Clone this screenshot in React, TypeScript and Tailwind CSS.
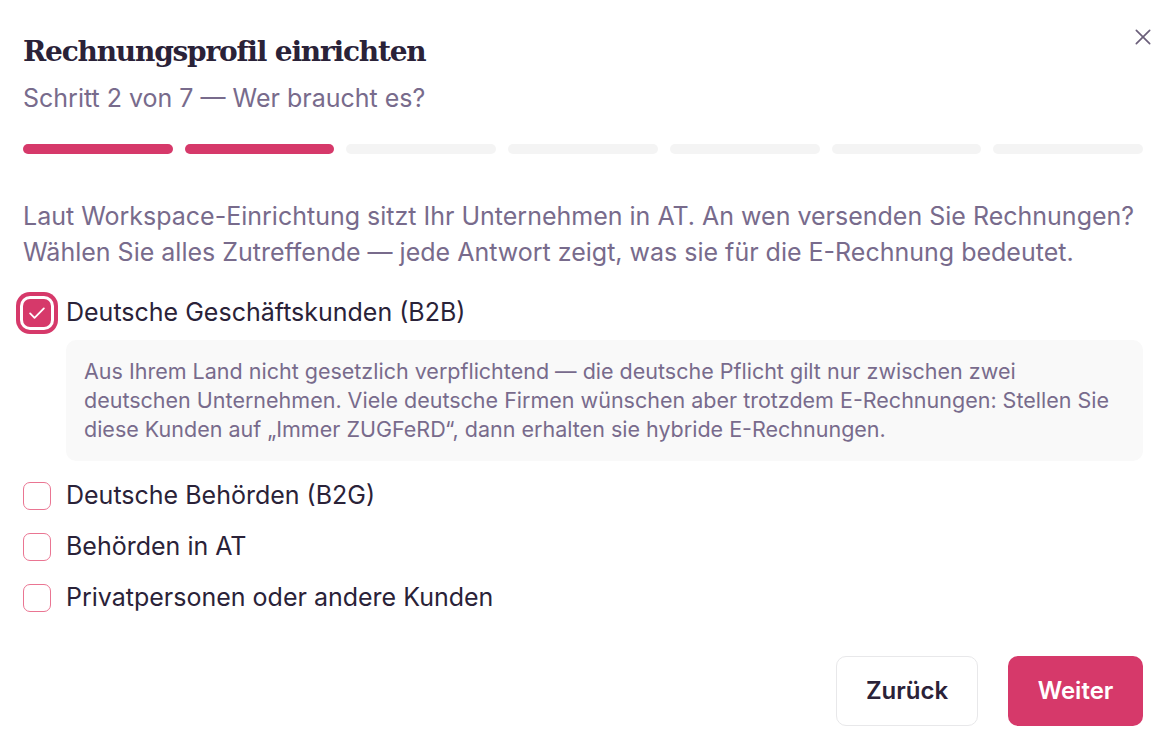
import React from "react";

const PINK = "#d6396a";

function Box({ checked }: { checked?: boolean }) {
  if (checked) {
    return (
      <span className="flex h-[28px] w-[28px] shrink-0 items-center justify-center rounded-[7px] bg-[#d6396a] ring-4 ring-[#d6396a] ring-offset-[3px] ring-offset-white">
        <svg width="22" height="22" viewBox="0 0 24 24" fill="none" stroke="white" strokeWidth="2" strokeLinecap="round" strokeLinejoin="round">
          <path d="M4.5 12.5l4.8 4.8L19.5 7" />
        </svg>
      </span>
    );
  }
  return <span className="h-[28px] w-[28px] shrink-0 rounded-[7px] border-[1.5px] border-[#ea7592] bg-white" />;
}

export default function App() {
  const steps = [true, true, false, false, false, false, false];
  return (
    <div className="relative h-[752px] w-[1174px] bg-white pl-[23px] pr-[31px] pt-[30px] text-[#2a2238]" style={{ fontFamily: "Inter, 'Noto Sans', sans-serif" }}>
      <button className="absolute right-[21px] top-[27px] text-[#6b5f7a]">
        <svg width="20" height="20" viewBox="0 0 24 24" fill="none" stroke="currentColor" strokeWidth="2" strokeLinecap="round">
          <path d="M4 4l16 16M20 4L4 20" />
        </svg>
      </button>
      <h1 className="text-[28px] font-bold leading-[44px] tracking-[-1.2px] text-[#2a2238]" style={{ fontFamily: "'DejaVu Serif', 'Liberation Serif', serif" }}>
        Rechnungsprofil einrichten
      </h1>
      <p className="mt-[8px] text-[25px] leading-[32px] text-[#786b8c]">Schritt 2 von 7 — Wer braucht es?</p>
      <div className="mt-[30px] flex gap-3">
        {steps.map((on, i) => (
          <div key={i} className={`h-[10px] flex-1 rounded-full ${on ? "bg-[#d6396a]" : "bg-[#f4f4f4]"}`} />
        ))}
      </div>
      <p className="mt-[44px] text-[25px] leading-[36px] text-[#786b8c]">
        Laut Workspace-Einrichtung sitzt Ihr Unternehmen in AT. An wen versenden Sie Rechnungen? Wählen Sie alles Zutreffende — jede Antwort zeigt, was sie für die E-Rechnung bedeutet.
      </p>
      <div className="mt-[25px] flex flex-col">
        <label className="flex h-[36px] items-center gap-[15px]">
          <Box checked />
          <span className="text-[25px]">Deutsche Geschäftskunden (B2B)</span>
        </label>
        <div className="ml-[43px] mt-[9px] rounded-[10px] bg-[#f9f9f9] px-[18px] py-[17px] text-[21.5px] leading-[29px] text-[#786b8c]">
          Aus Ihrem Land nicht gesetzlich verpflichtend — die deutsche Pflicht gilt nur zwischen zwei deutschen Unternehmen. Viele deutsche Firmen wünschen aber trotzdem E-Rechnungen: Stellen Sie diese Kunden auf „Immer ZUGFeRD“, dann erhalten sie hybride E-Rechnungen.
        </div>
        {["Deutsche Behörden (B2G)", "Behörden in AT", "Privatpersonen oder andere Kunden"].map((t, i) => (
          <label key={t} className={`flex h-[36px] items-center gap-[15px] ${i === 0 ? "mt-[17px]" : "mt-[15px]"}`}>
            <Box />
            <span className="text-[25px]">{t}</span>
          </label>
        ))}
      </div>
      <div className="mt-[40px] flex justify-end gap-[30px]">
        <button className="h-[70px] w-[142px] rounded-[10px] border border-[#e8e8ea] bg-white text-[24px] font-semibold text-[#2a2238]">Zurück</button>
        <button className="h-[70px] w-[135px] rounded-[10px] text-[24px] font-semibold text-white" style={{ background: PINK }}>Weiter</button>
      </div>
    </div>
  );
}
